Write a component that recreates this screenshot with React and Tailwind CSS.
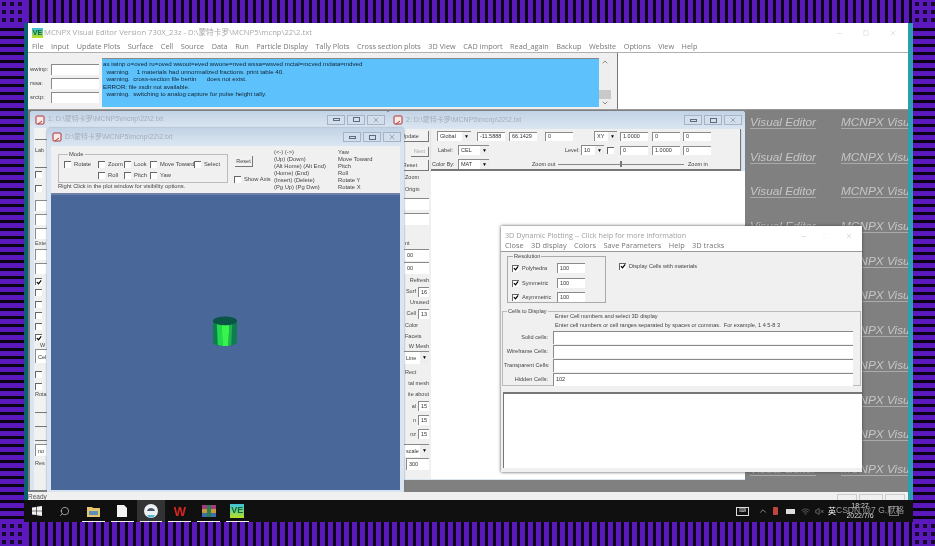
import { Search, X, Minus, Square, ChevronUp, ChevronDown, VolumeX, Wifi } from 'lucide-react'

const MENU = ['File', 'Input', 'Update Plots', 'Surface', 'Cell', 'Source', 'Data', 'Run', 'Particle Display', 'Tally Plots', 'Cross section plots', '3D View', 'CAD import', 'Read_again', 'Backup', 'Website', 'Options', 'View', 'Help']
const PATH = 'D:\\蒙特卡罗\\MCNP5\\mcnp\\22\\2.txt'
const KEYS = ['(<-) (->)', '(Up) (Down)', '(Alt Home) (Alt End)', '(Home) (End)', '(Insert) (Delete)', '(Pg Up) (Pg Dwn)']
const ACTIONS = ['Yaw', 'Move Toward', 'Pitch', 'Roll', 'Rotate Y', 'Rotate X']
const LOG = [
  'as iwinp o=oved ru=oved wwout=eved wwone=nved wssa=wsved mctal=mcved mdata=mdved',
  '  warning.    1 materials had unnormalized fractions. print table 40.',
  '  warning.  cross-section file bertin      does not exist.',
  'ERROR: file xsdir not available.',
  '  warning.  switching to analog capture for pulse height tally.',
]
const WATERMARK_ROWS = [0, 1, 2, 3, 4, 5, 6, 7, 8, 9, 10]

function Stripes({ className }) {
  return <div className={className} />
}

function Corner({ className }) {
  return <div className={`bg-[#5a18bd] bg-[radial-gradient(#160a2a_38%,transparent_45%)] bg-[length:8px_8px] ${className}`} />
}

function Chk({ checked, className = '' }) {
  return (
    <span className={`flex h-[7px] w-[7px] shrink-0 items-center justify-center border-l border-t border-[#666] bg-white ${className}`}>
      {checked && (
        <svg width="7" height="7" viewBox="0 0 7 7" fill="none" stroke="#000" strokeWidth="1.4">
          <path d="M1 3l2 2 3-4" />
        </svg>
      )}
    </span>
  )
}

function ChkLabel({ label, className = '', checked }) {
  return (
    <span className={`flex items-center gap-[3px] whitespace-nowrap ${className}`}>
      <Chk checked={checked} />
      {label}
    </span>
  )
}

function Field({ value, className = '' }) {
  return (
    <span className={`flex items-center overflow-hidden whitespace-nowrap border-l border-t border-[#8a8a8a] bg-white pl-[2px] text-[5.5px] text-[#333] ${className}`}>
      {value}
    </span>
  )
}

function Combo({ value, className = '' }) {
  return (
    <span className={`flex items-center justify-between overflow-hidden border-l border-t border-[#8a8a8a] bg-white pl-[2px] text-[5.5px] text-[#333] ${className}`}>
      {value}
      <span className="flex h-full w-[9px] shrink-0 items-center justify-center bg-[#eee] text-[5px] text-black">▼</span>
    </span>
  )
}

function Btn({ label, className = '' }) {
  return (
    <span className={`flex items-center justify-center overflow-hidden whitespace-nowrap border-b border-r border-[#777] bg-[#f2f2f2] text-[5.5px] text-[#444] ${className}`}>
      {label}
    </span>
  )
}

function DocIcon() {
  return (
    <svg width="10" height="10" viewBox="0 0 10 10" className="shrink-0">
      <rect x="1" y="1" width="8" height="8" rx="1" fill="#fbe9e4" stroke="#a8323a" strokeWidth="1" />
      <path d="M3 9l4-3" stroke="#a8323a" strokeWidth="1" />
    </svg>
  )
}

function MdiTitle({ title, className = '' }) {
  return (
    <div className={`flex h-[18px] items-center bg-[linear-gradient(#c2d3e6,#dbe6f2)] pl-[5px] pr-[3px] ${className}`}>
      <DocIcon />
      <span className="ml-[3px] whitespace-nowrap font-['Liberation_Sans','Noto_Sans_CJK_SC',sans-serif] text-[7px] text-[#a5aeb9]">{title}</span>
      <span className="ml-auto flex gap-[2px]">
        <span className="flex h-[10px] w-[18px] items-center justify-center border border-[#a4b4c6] bg-[#d3dfec]">
          <span className="h-[3px] w-[7px] border border-[#5d6b7c]" />
        </span>
        <span className="flex h-[10px] w-[18px] items-center justify-center border border-[#a4b4c6] bg-[#d3dfec]">
          <span className="h-[5px] w-[7px] border border-[#5d6b7c]" />
        </span>
        <span className="flex h-[10px] w-[18px] items-center justify-center border border-[#a4b4c6] bg-[#d3dfec] text-[#5d6b7c]">
          <X size={8} strokeWidth={1.5} />
        </span>
      </span>
    </div>
  )
}

function BackWindow() {
  const t = 'overflow-hidden whitespace-nowrap text-[5.5px] text-[#444]'
  return (
    <div className="absolute left-[2px] top-[1px] flex h-[379px] w-[358px] flex-col overflow-hidden rounded-t-[3px] bg-[#d9e5f1]">
      <MdiTitle title={`1:  ${PATH}`} />
      <div className="ml-[4px] flex h-full w-[40px] flex-col bg-[#f0f0f0] pl-[1px] pt-[1px]">
        <Btn label="U" className="h-[11px] w-full" />
        <span className={`${t} mt-[5px] h-[12px] leading-[10px]`}>Lab</span>
        <Btn label="" className="h-[11px] w-full" />
        <Chk className="mt-[3px]" />
        <Chk className="mt-[7px]" />
        <Field value="" className="mt-[8px] h-[11px]" />
        <Field value="" className="mt-[3px] h-[11px]" />
        <Field value="" className="mt-[3px] h-[11px]" />
        <span className={`${t} h-[9px] leading-[9px]`}>Exte</span>
        <Field value="" className="mt-[1px] h-[11px]" />
        <Field value="" className="mt-[3px] h-[11px]" />
        <Chk checked className="mt-[4px]" />
        <Chk className="mt-[4px]" />
        <Chk className="mt-[5px]" />
        <Chk className="mt-[4px]" />
        <Chk className="mt-[4px]" />
        <Chk checked className="mt-[4px]" />
        <span className={`${t} ml-[5px] h-[8px] leading-[8px]`}>W</span>
        <Field value="Cel" className="h-[14px]" />
        <Chk className="mt-[8px]" />
        <Chk className="mt-[5px]" />
        <span className={`${t} h-[9px] leading-[9px]`}>Rota</span>
        <Btn label="Axi" className="mt-[2px] h-[12px] w-full" />
        <Btn label="Ve" className="mt-[2px] h-[12px] w-full" />
        <Btn label="Ho" className="mt-[2px] h-[12px] w-full" />
        <Field value="no" className="mt-[3px] h-[12px]" />
        <span className={`${t} mt-[3px] h-[9px] leading-[9px]`}>Res</span>
      </div>
    </div>
  )
}

function StripText({ label, className = '' }) {
  return <span className={`flex items-center justify-end overflow-hidden whitespace-nowrap text-[5.5px] text-[#444] ${className}`}>{label}</span>
}

function StripField({ label, value, className = '' }) {
  return (
    <span className={`flex items-center justify-end gap-[2px] overflow-hidden whitespace-nowrap text-[5.5px] text-[#444] ${className}`}>
      {label}
      <Field value={value} className="h-[10px] w-[11px] shrink-0" />
    </span>
  )
}

function RightWindow() {
  return (
    <div className="absolute left-[360px] top-[1px] flex h-[369px] w-[357px] flex-col overflow-hidden rounded-t-[3px] bg-[#d9e5f1]">
      <MdiTitle title={`2:  ${PATH}`} />
      <div className="flex flex-1 pb-[1px]">
        <div className="ml-[4px] flex w-[39px] shrink-0 flex-col bg-[#f0f0f0] pr-[2px] pt-[2px]">
          <Btn label="Update" className="h-[11px] w-full" />
          <div className="mt-[5px] flex h-[10px] justify-end">
            <Btn label="Next" className="w-[18px] text-[#aaa]" />
          </div>
          <Btn label="Reset" className="mt-[3px] h-[11px] w-full" />
          <StripText label="Zoom" className="h-[12px] justify-start pl-[13px]" />
          <StripText label="Origin" className="h-[12px] justify-start pl-[13px]" />
          <Field value="" className="mt-[3px] h-[12px]" />
          <Field value="" className="mt-[3px] h-[12px]" />
          <StripText label="" className="h-[12px]" />
          <StripText label="nt" className="h-[12px] justify-start pl-[13px]" />
          <Field value="00" className="h-[12px] pl-[14px]" />
          <Field value="00" className="mt-[1px] h-[12px] pl-[14px]" />
          <StripText label="Refresh" className="h-[12px]" />
          <StripField label="Surf" value="16" className="h-[11px]" />
          <StripText label="Unused" className="h-[11px]" />
          <StripField label="Cell" value="13" className="h-[11px]" />
          <StripText label="Color" className="h-[12px] justify-start pl-[13px]" />
          <StripText label="Facets" className="h-[10px] justify-start pl-[13px]" />
          <StripText label="W Mesh" className="h-[10px]" />
          <Combo value={<span className="pl-[11px]">Line</span>} className="h-[13px]" />
          <StripText label="Rect" className="mt-[3px] h-[11px] justify-start pl-[13px]" />
          <StripText label="tal mesh" className="h-[11px]" />
          <StripText label="ite about" className="h-[10px]" />
          <StripField label="al" value="15" className="h-[14px]" />
          <StripField label="n" value="15" className="h-[14px]" />
          <StripField label="nz" value="15" className="h-[14px]" />
          <Combo value={<span className="pl-[11px]">scale</span>} className="mt-[3px] h-[13px]" />
          <Field value="300" className="ml-[14px] mt-[1px] h-[12px]" />
        </div>
        <div className="flex flex-1 flex-col">
          <div className="flex h-[42px] w-[310px] flex-col gap-[4px] border-b-2 border-r border-[#777] bg-[#f0f0f0] pt-[1px] text-[5.5px] text-[#444] shadow-[0_1px_1px_#999]">
            <div className="mt-[1px] flex h-[10px] items-center">
              <Combo value="Global" className="ml-[6px] h-[10px] w-[34px]" />
              <Field value="-11.5888" className="ml-[6px] h-[9px] w-[28px]" />
              <Field value="66.1429" className="ml-[4px] h-[9px] w-[28px]" />
              <Field value="0" className="ml-[8px] h-[9px] w-[28px]" />
              <Combo value="XY" className="ml-[21px] h-[10px] w-[23px]" />
              <Field value="1.0000" className="ml-[3px] h-[9px] w-[28px]" />
              <Field value="0" className="ml-[4px] h-[9px] w-[28px]" />
              <Field value="0" className="ml-[3px] h-[9px] w-[28px]" />
            </div>
            <div className="flex h-[10px] items-center">
              <span className="ml-[7px] w-[20px]">Label:</span>
              <Combo value="CEL" className="h-[10px] w-[31px]" />
              <span className="ml-[76px] w-[16px]">Level:</span>
              <Combo value="10" className="h-[10px] w-[23px]" />
              <Chk className="ml-[3px]" />
              <Field value="0" className="ml-[6px] h-[9px] w-[28px]" />
              <Field value="1.0000" className="ml-[4px] h-[9px] w-[28px]" />
              <Field value="0" className="ml-[3px] h-[9px] w-[28px]" />
            </div>
            <div className="flex h-[10px] items-center">
              <span className="ml-[1px] w-[26px] whitespace-nowrap">Color By:</span>
              <Combo value="MAT" className="h-[10px] w-[31px]" />
              <span className="ml-[43px] w-[26px] whitespace-nowrap">Zoom out</span>
              <span className="flex h-[1px] w-[126px] items-center justify-center bg-[#888]">
                <span className="h-[6px] w-[2px] bg-[#777]" />
              </span>
              <span className="ml-[4px] whitespace-nowrap">Zoom in</span>
            </div>
          </div>
          <div className="flex-1 bg-white" />
        </div>
      </div>
    </div>
  )
}

function FrontWindow() {
  return (
    <div className="absolute left-[19px] top-[18px] flex h-[364px] w-[357px] flex-col overflow-hidden rounded-t-[3px] bg-[#d9e5f1] shadow-[0_0_2px_#6b7a8c]">
      <MdiTitle title={PATH} />
      <div className="mx-[4px] flex h-[47px] bg-[#f0f0f0] text-[5.8px] leading-[7px] text-[#444]">
        <div className="ml-[7px] w-[177px] shrink-0 pt-[5px]">
          <fieldset className="h-[32px] w-[170px] border border-[#bcbcbc] pl-[5px]">
            <legend className="ml-[4px] px-[1px]">Mode</legend>
            <div className="mt-[2px] flex h-[8px] items-center">
              <ChkLabel label="Rotate" className="w-[34px]" />
              <ChkLabel label="Zoom" className="w-[26px]" />
              <ChkLabel label="Look" className="w-[26px]" />
              <ChkLabel label="Move Toward" className="w-[44px]" />
              <ChkLabel label="Select" />
            </div>
            <div className="mt-[3px] flex h-[8px] items-center pl-[34px]">
              <ChkLabel label="Roll" className="w-[26px]" />
              <ChkLabel label="Pitch" className="w-[26px]" />
              <ChkLabel label="Yaw" />
            </div>
          </fieldset>
          <div className="whitespace-nowrap">Right Click in the plot window for visibility options.</div>
        </div>
        <div className="w-[39px] shrink-0 pt-[10px]">
          <Btn label="Reset" className="h-[11px] w-[18px]" />
          <ChkLabel label="Show Axis" className="mt-[9px] -ml-[1px]" />
        </div>
        <div className="w-[64px] shrink-0 whitespace-nowrap pt-[3px]">
          {KEYS.map(k => <div key={k}>{k}</div>)}
        </div>
        <div className="whitespace-nowrap pt-[3px]">
          {ACTIONS.map(a => <div key={a}>{a}</div>)}
        </div>
      </div>
      <div className="mx-[4px] flex flex-1 items-center justify-center border-t-2 border-[#6c82a8] bg-[#4a6799]">
        <svg width="26" height="32" viewBox="0 0 27 33" className="ml-[-1px] mt-[-21px]">
          <path d="M1 5v23c2 4 22 4 25 0V5z" fill="#0f7d52" />
          <path d="M5 8h5l1 23-5-1z" fill="#22d84c" />
          <path d="M10 8h8l-1 23h-6z" fill="#38f44e" />
          <path d="M18 8h3l-1 22-3 1z" fill="#1fb34a" />
          <ellipse cx="13.5" cy="5" rx="12.5" ry="4.5" fill="#0b5547" />
        </svg>
      </div>
      <div className="h-[2px]" />
    </div>
  )
}

function ResRow({ label, value, className = '' }) {
  return (
    <div className={`flex items-center ${className}`}>
      <ChkLabel label={label} checked className="w-[45px]" />
      <Field value={value} className="h-[10px] w-[28px]" />
    </div>
  )
}

function CellRow({ label, value }) {
  return (
    <div className="flex h-[14px] items-center">
      <span className="w-[44px] whitespace-nowrap text-right">{label}</span>
      <Field value={value} className="ml-[5px] h-[13px] w-[300px]" />
    </div>
  )
}

function DynamicDialog() {
  return (
    <div className="absolute left-[473px] top-[116px] flex h-[246px] w-[361px] flex-col bg-[#f0f0f0] shadow-[0_0_3px_#444]">
      <div className="flex h-[15px] items-end bg-white pl-[4px] font-['Open_Sans',sans-serif] text-[7.2px] text-[#a0a0a0]">
        3D Dynamic Plotting -- Click help for more information
        <span className="ml-auto flex items-center gap-[16px] pb-[1px] pr-[9px] text-[#999]">
          <Minus size={7} strokeWidth={1} />
          <Square size={6} strokeWidth={1} className="text-[#eee]" />
          <X size={8} strokeWidth={1} />
        </span>
      </div>
      <div className="flex h-[11px] items-center gap-[7.4px] border-b border-[#999] bg-white pl-[4px] font-['Open_Sans',sans-serif] text-[7.4px] text-[#777]">
        {['Close', '3D display', 'Colors', 'Save Parameters', 'Help', '3D tracks'].map(m => <span key={m}>{m}</span>)}
      </div>
      <div className="font-['Liberation_Sans',sans-serif] text-[5.6px] leading-[7px] text-[#444]">
        <div className="flex">
          <fieldset className="ml-[6px] mt-[1px] h-[50px] w-[99px] border border-[#aaa] pl-[4px]">
            <legend className="ml-[1px] px-[1px]">Resolution</legend>
            <ResRow label="Polyhedra" value="100" className="mt-[3px]" />
            <ResRow label="Symmetric" value="100" className="mt-[5px]" />
            <ResRow label="Asymmetric" value="100" className="mt-[4px]" />
          </fieldset>
          <ChkLabel label="Display Cells with materials" checked className="ml-[13px] mt-[10px] h-[8px]" />
        </div>
        <fieldset className="mx-[1px] mt-[5px] h-[78px] border border-[#bbb] pl-[1px]">
          <legend className="ml-[3px] px-[1px]">Cells to Display</legend>
          <div className="-mt-[2px] ml-[51px] h-[9px] whitespace-nowrap">Enter Cell numbers and select 3D display</div>
          <div className="ml-[51px] h-[8px] whitespace-pre">Enter cell numbers or cell ranges separated by spaces or commas.  For example, 1 4 5-8 3</div>
          <CellRow label="Solid cells:" value="" />
          <CellRow label="Wireframe Cells:" value="" />
          <CellRow label="Transparent Cells:" value="" />
          <CellRow label="Hidden Cells:" value="102" />
        </fieldset>
      </div>
      <div className="ml-[2px] mt-[6px] flex-1 border-l border-t-2 border-[#777] bg-white" />
      <div className="h-[4px]" />
    </div>
  )
}

function TrayPin({ className = '', children }) {
  return (
    <span className={`relative flex h-full w-[28.8px] shrink-0 items-center justify-center ${className}`}>
      {children}
      <span className="absolute bottom-0 left-[3px] right-[3px] h-px bg-[#eee]" />
    </span>
  )
}

function Taskbar() {
  return (
    <div className="relative flex h-[22px] items-center bg-[#101010]">
      <svg width="10" height="10" viewBox="0 0 10 10" className="ml-[8px] shrink-0" fill="#f0f0f0">
        <path d="M0 1.5l4-.6v3.8H0zM4.6.8L10 0v4.7H4.6zM0 5.3h4v3.8l-4-.6zM4.6 5.3H10V10l-5.4-.8z" />
      </svg>
      <Search size={11} strokeWidth={1.4} className="ml-[17px] shrink-0 -scale-x-100 text-[#ddd]" />
      <TrayPin className="ml-[9px]">
        <svg width="13" height="11" viewBox="0 0 13 11">
          <path d="M0 1h5l1 1h7v9H0z" fill="#e6c66c" />
          <rect x="2" y="5" width="9" height="4" fill="#5d90b8" />
        </svg>
      </TrayPin>
      <TrayPin>
        <svg width="10" height="12" viewBox="0 0 10 12">
          <path d="M0 0h7l3 3v9H0z" fill="#f4f4f4" />
        </svg>
      </TrayPin>
      <TrayPin className="bg-[#333]">
        <svg width="14" height="14" viewBox="0 0 14 14">
          <circle cx="7" cy="7" r="7" fill="#eef1f4" />
          <path d="M3 7c1-4 7-4 8 0z" fill="#4c5468" />
          <path d="M3 11h8l-2 2.500H5z" fill="#4eb5d8" />
        </svg>
      </TrayPin>
      <TrayPin>
        <span className="font-['Liberation_Sans',sans-serif] text-[13px] font-bold leading-none text-[#d8261f]">W</span>
      </TrayPin>
      <TrayPin>
        <svg width="14" height="12" viewBox="0 0 14 12">
          <rect width="14" height="4" fill="#a33d7a" />
          <rect y="4" width="14" height="4" fill="#c9983a" />
          <rect y="8" width="14" height="4" fill="#3b6fa8" />
          <rect x="5" width="4" height="12" fill="#2d7d4f" />
        </svg>
      </TrayPin>
      <TrayPin>
        <span className="flex h-[14px] w-[14px] items-center justify-center bg-[linear-gradient(#3cc4e0,#b8e020)] font-['Liberation_Sans',sans-serif] text-[9px] font-bold text-[#0a6a3a]">VE</span>
      </TrayPin>
      <div className="ml-auto flex items-center text-[#ccc]">
        <span className="flex h-[9px] w-[13px] items-center justify-center border border-[#ddd] text-[5px]">⌨</span>
        <ChevronUp size={10} strokeWidth={1.5} className="ml-[9px]" />
        <span className="ml-[5px] h-[8px] w-[5px] rounded-[1px] bg-[#c0453c]" />
        <span className="ml-[8px] h-[5px] w-[9px] bg-[#ddd]" />
        <Wifi size={9} strokeWidth={1.5} className="ml-[6px] text-[#888]" />
        <VolumeX size={9} strokeWidth={1.2} className="ml-[5px]" />
        <span className="ml-[4px] font-['Noto_Sans_CJK_SC',sans-serif] text-[8px] text-white">英</span>
        <div className="relative w-[48px] text-center font-['Liberation_Sans','Noto_Sans_CJK_SC',sans-serif] text-[7px] leading-[10px] text-[#ddd]">
          <div>18:27</div>
          <div>2022/7/6</div>
          <span className="absolute left-0 top-[4px] whitespace-nowrap text-[8.500px] text-[#9a9a9a]">CSDN @7 G.默格</span>
        </div>
        <span className="ml-[5px] mr-[14px] h-[10px] w-[10px] border border-[#777]" />
      </div>
    </div>
  )
}

export default function App() {
  return (
    <div className="flex h-[546px] w-[935px] flex-col overflow-hidden bg-black font-['Liberation_Sans','Noto_Sans_CJK_SC',sans-serif] blur-[0.35px]">
      <div className="flex h-[23px]">
        <Corner className="w-[24px]" />
        <Stripes className="flex-1 bg-[repeating-linear-gradient(90deg,#5a18bd_0px,#5a18bd_5px,#0a0414_5px,#0a0414_8px)]" />
        <Corner className="w-[22px]" />
      </div>
      <div className="flex h-[499px]">
        <Stripes className="w-[24px] bg-[repeating-linear-gradient(180deg,#5a18bd_0px,#5a18bd_5px,#0a0414_5px,#0a0414_8px)]" />
        <div className="flex w-[889px] flex-col">
          <div className="flex h-[477px] flex-col border-l-[4px] border-r-[5px] border-l-[#0b5f70] border-r-[#2b9fb0] bg-white">
            <div className="flex h-[20px] shrink-0 items-center pl-[4px] text-[8px] text-[#a8a8a8]">
              <span className="flex h-[10px] w-[11px] items-center justify-center bg-[linear-gradient(#35c0e0,#c4e020)] text-[7px] font-bold text-[#0a6a3a]">VE</span>
              <span className="ml-px font-['Open_Sans','Noto_Sans_CJK_SC',sans-serif] text-[7.7px]">MCNPX Visual Editor Version 730X_23z - {PATH}</span>
              <span className="ml-auto flex items-center gap-[20px] pr-[11px] text-[#aaa]">
                <Minus size={7} strokeWidth={1} />
                <Square size={6} strokeWidth={1} />
                <X size={8} strokeWidth={1} />
              </span>
            </div>
            <div className="flex h-[10px] shrink-0 items-start gap-[7.500px] border-b border-[#b0b0b0] pl-[4px] font-['Open_Sans',sans-serif] text-[7.3px] leading-[7px] text-[#777]">
              {MENU.map(m => <span key={m} className="whitespace-nowrap">{m}</span>)}
            </div>
            <div className="flex h-[57px] shrink-0 border-b border-[#999]">
              <div className="flex w-[590px] border-r border-[#777] bg-[#f0f0f0] pl-[2px] pt-[5px] text-[6px] text-[#444]">
                <div className="flex w-[72px] flex-col gap-[3px] pt-[6px]">
                  {['wwinp:', 'rssa:', 'srctp:'].map(l => (
                    <div key={l} className="flex h-[11px] items-center">
                      <span className="w-[21px]">{l}</span>
                      <Field value="" className="h-[11px] w-[48px]" />
                    </div>
                  ))}
                </div>
                <div className="h-[49px] w-[497px] whitespace-pre border-t border-[#888] bg-[#5dc2fb] pl-px pt-px font-['Liberation_Sans',sans-serif] text-[6.2px] leading-[7.5px] text-[#123]">
                  {LOG.map(l => <div key={l}>{l}</div>)}
                </div>
                <div className="flex h-[49px] w-[12px] flex-col items-center justify-between bg-[#eee] text-[#555]">
                  <ChevronUp size={8} />
                  <span className="mt-auto h-[9px] w-full bg-[#c9c9c9]" />
                  <ChevronDown size={8} />
                </div>
              </div>
            </div>
            <div className="relative h-[382px] shrink-0 overflow-hidden bg-[#808080]">
              <div className="flex flex-col pl-[722px] pt-[4px]">
                {WATERMARK_ROWS.map(r => (
                  <div key={r} className="flex h-[34.7px] shrink-0 gap-[25px] whitespace-nowrap text-[11.8px] italic text-[#c6c6c6] underline decoration-[#aaa] underline-offset-2">
                    <span>Visual Editor</span>
                    <span>MCNPX Visual Editor</span>
                  </div>
                ))}
              </div>
              <BackWindow />
              <RightWindow />
              <FrontWindow />
              <DynamicDialog />
            </div>
            <div className="flex h-[8px] shrink-0 items-start justify-between overflow-hidden bg-[#f0f0f0] text-[6.5px] leading-[10px] text-[#555]">
              <span>Ready</span>
              <span className="mr-[3px] mt-[2px] flex gap-[2px]">
                <span className="h-[8px] w-[20px] border border-[#ccc]" />
                <span className="h-[8px] w-[24px] border border-[#ccc]" />
                <span className="h-[8px] w-[20px] border border-[#ccc]" />
              </span>
            </div>
          </div>
          <Taskbar />
        </div>
        <Stripes className="w-[22px] bg-[repeating-linear-gradient(180deg,#5a18bd_0px,#5a18bd_5px,#0a0414_5px,#0a0414_8px)]" />
      </div>
      <div className="flex h-[24px]">
        <Corner className="w-[24px]" />
        <Stripes className="flex-1 bg-[repeating-linear-gradient(90deg,#5a18bd_0px,#5a18bd_5px,#0a0414_5px,#0a0414_8px)]" />
        <Corner className="w-[22px]" />
      </div>
    </div>
  )
}
